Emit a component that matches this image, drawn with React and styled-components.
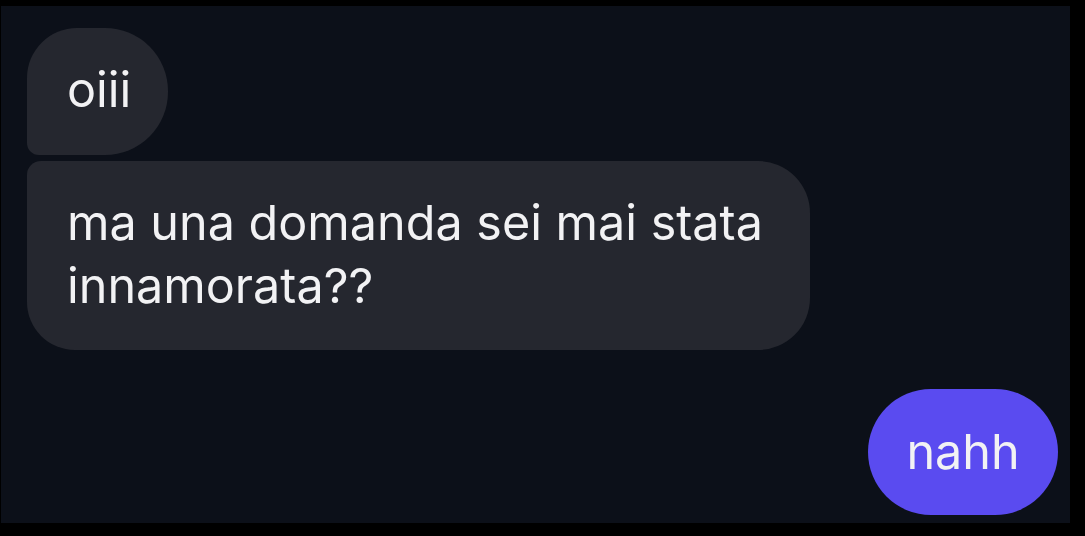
import React from "react";
import styled, { createGlobalStyle } from "styled-components";

const GlobalStyle = createGlobalStyle`
	html, body {
		margin: 0;
		padding: 0;
		background: #000;
	}
	body {
		font-family: Inter, "Noto Sans", sans-serif;
		-webkit-font-smoothing: antialiased;
	}
`;

const Frame = styled.div`
	width: 1085px;
	height: 536px;
	padding: 6px 15px 13px 1px;
	box-sizing: border-box;
	background: #000;
`;

const Chat = styled.div`
	height: 100%;
	box-sizing: border-box;
	padding: 22px 12px 0 26px;
	background: #0c1019;
	display: flex;
	flex-direction: column;
	align-items: flex-start;
`;

const Bubble = styled.div`
	box-sizing: border-box;
	color: #f2f2f4;
	font-size: 48.5px;
	line-height: 63px;
	background: ${(props) => (props.mine ? "#5a4bf0" : "#25272f")};
	border-radius: ${(props) => props.radius};
	margin-top: ${(props) => props.gap || "0px"};
	align-self: ${(props) => (props.mine ? "flex-end" : "flex-start")};
`;

const Hello = styled(Bubble)`
	width: 141px;
	height: 127px;
	padding: 30px 0 0 40px;
`;

const Question = styled(Bubble)`
	width: 783px;
	height: 189px;
	padding: 30px 30px 0 40px;
`;

const Reply = styled(Bubble)`
	width: 190px;
	height: 126px;
	display: flex;
	align-items: center;
	justify-content: center;
	padding-bottom: 2px;
`;

export default function App() {
	return (
		<>
			<GlobalStyle />
			<Frame>
				<Chat>
					<Hello radius="50px 63px 63px 12px">oiii</Hello>
					<Question radius="14px 52px 52px 48px" gap="6px">
						ma una domanda sei mai stata innamorata??
					</Question>
					<Reply mine radius="63px" gap="39px">
						nahh
					</Reply>
				</Chat>
			</Frame>
		</>
	);
}
